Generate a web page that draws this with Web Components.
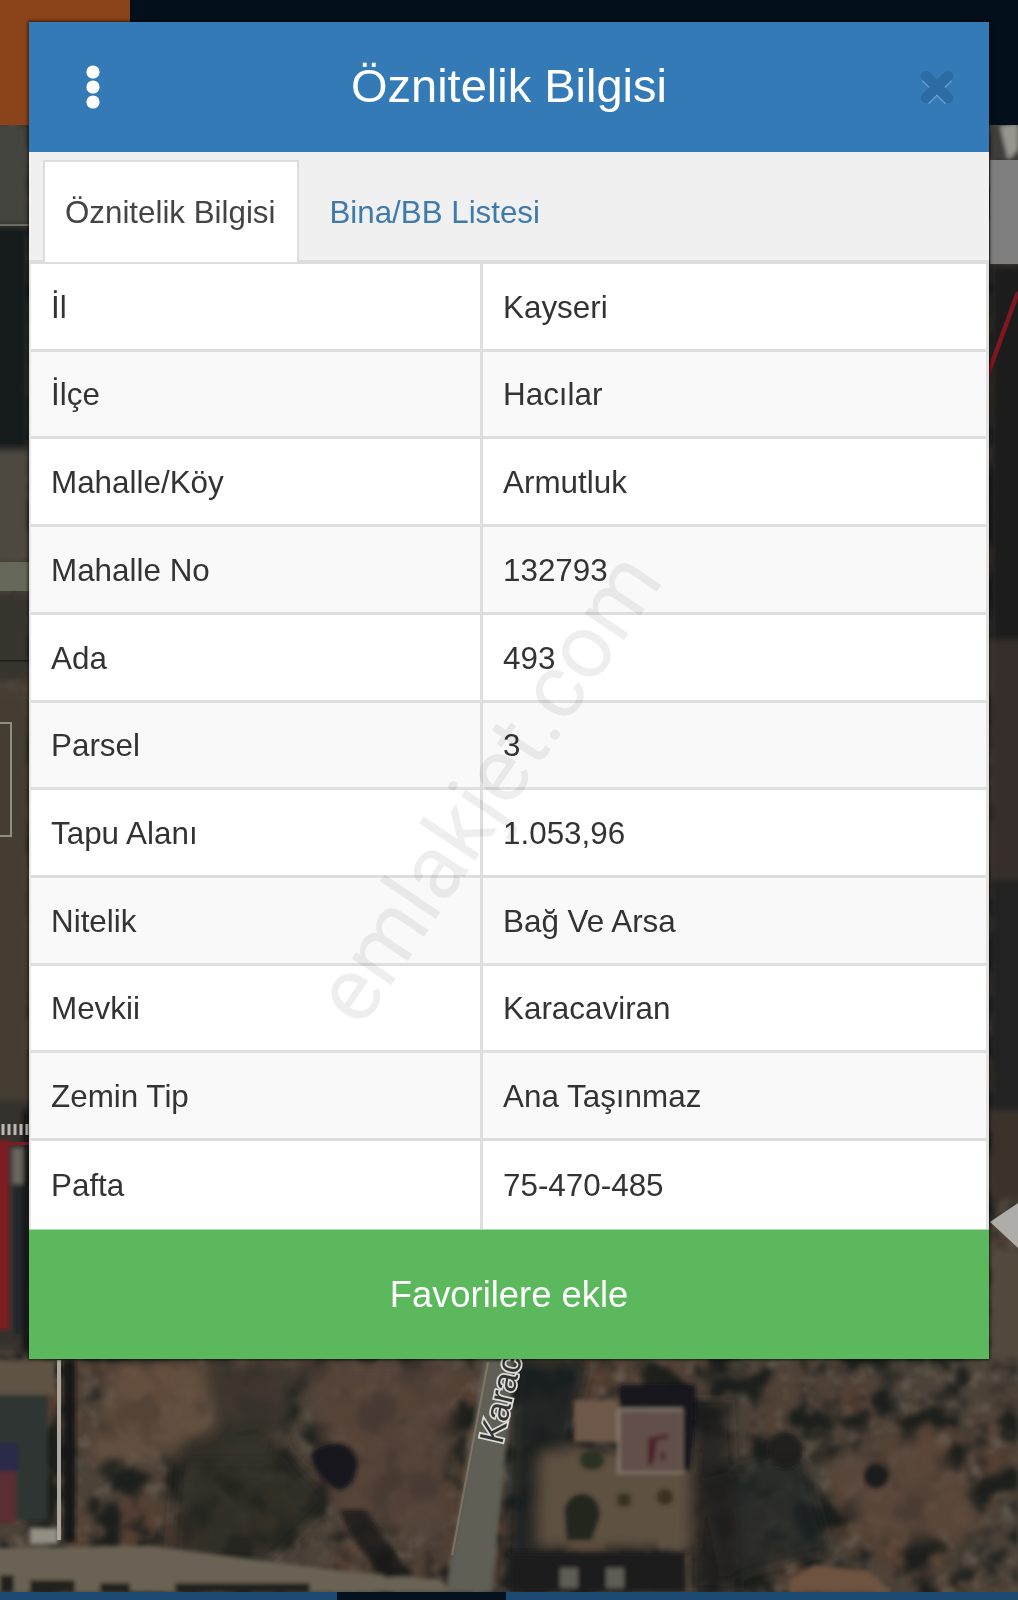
<!DOCTYPE html>
<html lang="tr">
<head>
<meta charset="utf-8">
<title>Öznitelik Bilgisi</title>
<style>
  html, body { margin: 0; padding: 0; background: #2b2620; }
</style>
</head>
<body>
<map-screen>
  <info-modal heading="Öznitelik Bilgisi">
    <modal-tabs slot="tabs">
      <tab-item active>Öznitelik Bilgisi</tab-item>
      <tab-item>Bina/BB Listesi</tab-item>
    </modal-tabs>
    <attr-row><span slot="label">İl</span><span slot="value">Kayseri</span></attr-row>
    <attr-row striped><span slot="label">İlçe</span><span slot="value">Hacılar</span></attr-row>
    <attr-row><span slot="label">Mahalle/Köy</span><span slot="value">Armutluk</span></attr-row>
    <attr-row striped><span slot="label">Mahalle No</span><span slot="value">132793</span></attr-row>
    <attr-row><span slot="label">Ada</span><span slot="value">493</span></attr-row>
    <attr-row striped><span slot="label">Parsel</span><span slot="value">3</span></attr-row>
    <attr-row><span slot="label">Tapu Alanı</span><span slot="value">1.053,96</span></attr-row>
    <attr-row striped><span slot="label">Nitelik</span><span slot="value">Bağ Ve Arsa</span></attr-row>
    <attr-row><span slot="label">Mevkii</span><span slot="value">Karacaviran</span></attr-row>
    <attr-row striped><span slot="label">Zemin Tip</span><span slot="value">Ana Taşınmaz</span></attr-row>
    <attr-row><span slot="label">Pafta</span><span slot="value">75-470-485</span></attr-row>
    <span slot="action">Favorilere ekle</span>
  </info-modal>
</map-screen>

<script>
class MapScreen extends HTMLElement {
  constructor() {
    super();
    this.attachShadow({ mode: 'open' }).innerHTML = `
<style>
  :host { display: block; position: relative; width: 1018px; height: 1600px; box-sizing: border-box;
          padding: 22px 29px 0; overflow: hidden; font-family: "Liberation Sans", Arial, sans-serif; }
  svg.bg { position: absolute; inset: 0; width: 1018px; height: 1600px; display: block; }
  .fg { position: relative; }
</style>
<svg class="bg" viewBox="0 0 1018 1600" aria-hidden="true">
  <defs>
    <filter id="trees" x="0" y="0" width="100%" height="100%" color-interpolation-filters="sRGB">
      <feTurbulence type="fractalNoise" baseFrequency=".03" numOctaves="4" seed="11"/>
      <feColorMatrix type="matrix" values="0 0 0 0 .11  0 0 0 0 .12  0 0 0 0 .11  5 0 0 0 -2.3"/>
      <feGaussianBlur stdDeviation="2.5"/>
    </filter>
    <filter id="mott" x="0" y="0" width="100%" height="100%" color-interpolation-filters="sRGB">
      <feTurbulence type="fractalNoise" baseFrequency=".06" numOctaves="3" seed="4"/>
      <feColorMatrix type="matrix" values="0 0 0 0 .50  0 0 0 0 .47  0 0 0 0 .42  3 0 0 0 -1.45"/>
      <feGaussianBlur stdDeviation="1.5"/>
    </filter>
    <filter id="rust" x="0" y="0" width="100%" height="100%" color-interpolation-filters="sRGB">
      <feTurbulence type="fractalNoise" baseFrequency=".012" numOctaves="3" seed="23"/>
      <feColorMatrix type="matrix" values="0 0 0 0 .34  0 0 0 0 .25  0 0 0 0 .20  3 0 0 0 -1.2"/>
      <feGaussianBlur stdDeviation="6"/>
    </filter>
    <filter id="b2"><feGaussianBlur stdDeviation="2"/></filter>
    <filter id="b3"><feGaussianBlur stdDeviation="3.5"/></filter>
    <filter id="b5"><feGaussianBlur stdDeviation="7"/></filter>
  </defs>

  <!-- satellite ground -->
  <rect width="1018" height="1600" fill="#4c4339"/>
  <rect width="1018" height="1600" filter="url(#rust)"/>
  <rect width="1018" height="1600" filter="url(#mott)" opacity=".4"/>
  <rect width="1018" height="1600" filter="url(#trees)"/>

  <!-- left strip -->
  <g filter="url(#b3)">
    <rect x="-10" y="125" width="39" height="100" fill="#45443f"/>
    <rect x="-10" y="225" width="39" height="225" fill="#191b1b"/>
    <rect x="-10" y="450" width="39" height="112" fill="#4e4a41"/>
    <rect x="-10" y="592" width="39" height="90" fill="#39352f"/>
    <rect x="-10" y="690" width="39" height="420" fill="#453c33"/>
    <rect x="-10" y="1100" width="39" height="250" fill="#34322e"/>
  </g>
  <g filter="url(#b2)">
    <rect x="-5" y="1140" width="14" height="190" fill="#7d1a22"/>
    <rect x="12" y="1148" width="17" height="36" fill="#68665e"/>
    <rect x="14" y="1185" width="15" height="150" fill="#24282a"/>
    <rect x="23" y="1110" width="6" height="240" fill="#141312"/>
  </g>
  <rect x="0" y="224" width="29" height="2" fill="#7b7a72" opacity=".8"/>
  <rect x="0" y="562" width="29" height="29" fill="#66685a"/>
  <rect x="0" y="660" width="29" height="1.5" fill="#1d1c1a"/>
  <path d="M0 723H11V836H0" fill="none" stroke="#9a9d93" stroke-width="2" opacity=".85"/>
  <rect x="0" y="1142" width="29" height="3" fill="#7d1a22"/>
  <path d="M3 1124v11M9 1124v11M15 1124v11M21 1124v11M27 1124v11" stroke="#b9b9b2" stroke-width="3"/>

  <!-- right strip -->
  <g filter="url(#b3)">
    <rect x="990" y="264" width="38" height="380" fill="#1f1e1d"/>
    <rect x="990" y="640" width="38" height="240" fill="#352e2a"/>
    <rect x="990" y="880" width="38" height="230" fill="#232220"/>
    <rect x="990" y="1110" width="38" height="90" fill="#3b332b"/>
    <rect x="990" y="1250" width="38" height="110" fill="#52483c"/>
  </g>
  <g filter="url(#b2)">
    <rect x="990" y="125" width="38" height="36" fill="#3f3e3a"/>
    <path d="M1000 126L1018 122V150L1008 160Z" fill="#96968e"/>
  </g>
  <rect x="990" y="160" width="28" height="104" fill="#7e7e7e"/>
  <path d="M988 374L1018 292" stroke="#7f1722" stroke-width="4.5"/>
  <path d="M990 1222L1018 1203V1248Z" fill="#aeada9"/>

  <!-- bottom area features -->
  <g filter="url(#b5)">
    <path d="M120 1360H300L270 1460H90Z" fill="#6b5545" opacity=".7"/>
    <path d="M300 1362H460L440 1540L340 1530Z" fill="#574438" opacity=".75"/>
    <path d="M180 1440L260 1420L330 1500L270 1560L170 1560Z" fill="#25281f" opacity=".75"/>
    <path d="M200 1362L300 1362L290 1430L220 1440Z" fill="#222420" opacity=".55"/>
    <path d="M515 1360L590 1360L570 1440L540 1590H505Z" fill="#1b1d1f" opacity=".85"/>
    <path d="M690 1400L730 1400L740 1590L690 1590Z" fill="#171a1a" opacity=".7"/>
    <path d="M700 1480L800 1450L830 1550L720 1580Z" fill="#1f2222" opacity=".7"/>
    <path d="M820 1460L930 1430L990 1530L870 1550Z" fill="#5e4a3b" opacity=".7"/>
    <path d="M540 1452H690V1548H538Z" fill="#5f5142"/>
  </g>
  <g filter="url(#b2)">
    <!-- left buildings and wall -->
    <rect x="-5" y="1395" width="53" height="125" fill="#2d3530"/>
    <rect x="-5" y="1443" width="23" height="28" fill="#2c2c4a"/>
    <rect x="-5" y="1471" width="21" height="52" fill="#5a2f30"/>
    <rect x="-5" y="1360" width="60" height="35" fill="#5e5245"/>
    <rect x="64" y="1360" width="11" height="182" fill="#151512"/>
    <rect x="30" y="1528" width="28" height="16" fill="#938f84"/>
    <!-- track along the foot -->
    <path d="M-5 1548L150 1546L350 1572L440 1580L450 1592H-5Z" fill="#6a6455"/>
    <path d="M0 1575h14v17H0zM30 1580h45v12H30zM100 1583h30v9h-30zM175 1583h135v9H175z" fill="#22221e"/>
    <!-- pond / shadow -->
    <path d="M312 1452C330 1438 352 1442 356 1460C358 1475 350 1490 338 1490C325 1482 310 1470 312 1452Z" fill="#13131f"/>
    <path d="M340 1510L365 1510L400 1560L415 1575L385 1578L350 1535Z" fill="#1a1b16" opacity=".8"/>
    <!-- road -->
    <path d="M484 1360L515 1360L492 1592H446Z" fill="#5f5e57"/>
    <!-- house -->
    <path d="M620 1385H695V1412L690 1470H682V1410H620Z" fill="#13141a"/>
    <path d="M574 1400H618V1442H574Z" fill="#6d5949"/>
    <rect x="617" y="1408" width="66" height="66" fill="#94897a" opacity=".8"/>
    <rect x="620" y="1411" width="62" height="61" fill="#625048"/>
    <path d="M648 1440L668 1436M655 1438L652 1462M650 1442L650 1465M662 1452L664 1460" stroke="#4c1f26" stroke-width="4"/>
    <circle cx="624" cy="1500" r="7" fill="#3b3020"/>
    <circle cx="665" cy="1497" r="8" fill="#3b3020"/>
    <path d="M565 1510a14 16 0 1 1 34 8l-8 22h-24z" fill="#22261f"/>
    <path d="M580 1460a12 10 0 1 1 24 0a12 10 0 1 1 -24 0" fill="#2b3022"/>
    <rect x="510" y="1552" width="175" height="40" fill="#1d1b1a"/>
    <path d="M560 1568h18v20h-18zM606 1568h18v20h-18z" fill="#5f5c52"/>
    <circle cx="876" cy="1476" r="12" fill="#1b1f1b"/>
    <circle cx="785" cy="1450" r="18" fill="#1a1c1a" opacity=".8"/>
    <path d="M790 1580L815 1565L870 1572L890 1592H790Z" fill="#6e523f"/>
  </g>
  <path d="M488 1362L452 1555" stroke="#a48e6f" stroke-width="2" opacity=".5"/>
  <rect x="57" y="1360" width="4" height="180" fill="#aaa89f"/>
  <text transform="translate(502 1445) rotate(-77)" font-family="Liberation Sans, sans-serif" font-size="34" font-weight="400"
        fill="#333" stroke="#dcdcd8" stroke-width="3.5" paint-order="stroke">Karac</text>

  <!-- top chrome -->
  <rect x="0" y="0" width="1018" height="125" fill="#03101c"/>
  <rect x="0" y="0" width="130" height="125" fill="#8b431a"/>

  <!-- bottom chrome -->
  <rect x="0" y="1592" width="1018" height="8" fill="#1c4a72"/>
  <rect x="337" y="1592" width="169" height="8" fill="#04121f"/>
</svg>
<div class="fg"><slot></slot></div>`;
  }
}
customElements.define('map-screen', MapScreen);

class InfoModal extends HTMLElement {
  constructor() {
    super();
    const heading = this.getAttribute('heading') || '';
    this.attachShadow({ mode: 'open' }).innerHTML = `
<style>
  :host { display: block; position: relative; width: 960px; background: #fff; color: #333;
          box-shadow: 0 0 3px 1px rgba(0,0,0,.65); }
  header { height: 130px; background: #337ab7; display: grid; grid-template-columns: 130px 1fr 130px; align-items: center; color: #fff; }
  header h1 { margin: 0; font: 400 47px/1 "Liberation Sans", Arial, sans-serif; text-align: center; padding-bottom: 4px; }
  .dots { padding-left: 57px; display: flex; }
  .close { padding-left: 61px; display: flex; }
  svg { display: block; }
  .table { border-left: 2px solid #e4e4e4; border-right: 3px solid #e0e0e0; }
  footer { height: 130px; background: #5cb85c; color: #fff; display: flex; align-items: center; justify-content: center;
           font: 400 36.4px/1 "Liberation Sans", Arial, sans-serif; border-top: 1px solid #a9dca9; box-sizing: border-box; padding-top: 2px; }
  .mark { position: absolute; left: 459px; top: 766px; transform: translate(-50%, -50%) rotate(-56deg);
          font: 400 90px/1 Roboto, "Liberation Sans", sans-serif; white-space: nowrap; color: rgba(0,0,0,.065); pointer-events: none; }
</style>
<header>
  <div class="dots">
    <svg width="14" height="44" viewBox="0 0 14 44"><g fill="#fff"><circle cx="7" cy="7" r="6.6"/><circle cx="7" cy="22" r="6.6"/><circle cx="7" cy="37" r="6.6"/></g></svg>
  </div>
  <h1>${heading}</h1>
  <div class="close">
    <svg width="34" height="34" viewBox="0 0 34 34">
      <path d="M5.5 7.5L28.5 30.5M28.5 7.5L5.5 30.5" stroke="#6ea6d8" stroke-width="10" fill="none"/>
      <path d="M6 6L28 28M28 6L6 28" stroke="#2c6ca3" stroke-width="10.5" fill="none" stroke-linecap="round"/>
    </svg>
  </div>
</header>
<slot name="tabs"></slot>
<div class="table"><slot></slot></div>
<footer><slot name="action"></slot></footer>
<div class="mark">emlakjet.com</div>`;
  }
}
customElements.define('info-modal', InfoModal);

class ModalTabs extends HTMLElement {
  constructor() {
    super();
    this.attachShadow({ mode: 'open' }).innerHTML = `
<style>
  :host { display: flex; height: 112px; box-sizing: border-box; padding: 8px 0 0 14px; background: #f0f0f0;
          border-bottom: 4px solid #ddd; }
</style>
<slot></slot>`;
  }
}
customElements.define('modal-tabs', ModalTabs);

class TabItem extends HTMLElement {
  constructor() {
    super();
    this.attachShadow({ mode: 'open' }).innerHTML = `
<style>
  :host { display: flex; align-items: center; box-sizing: border-box; height: 102px; padding: 2px 22px 0 21px;
          font: 400 31.3px/1 "Liberation Sans", Arial, sans-serif; color: #3f7aad; border: 2px solid transparent; border-bottom: 0; }
  :host([active]) { background: #fff; color: #444; border-color: #ddd; margin-right: 7px; padding: 2px 22px 0 20px; }
</style>
<slot></slot>`;
  }
}
customElements.define('tab-item', TabItem);

class AttrRow extends HTMLElement {
  constructor() {
    super();
    this.attachShadow({ mode: 'open' }).innerHTML = `
<style>
  :host { display: grid; grid-template-columns: 449px 1fr; height: 87.73px; box-sizing: border-box; background: #fff;
          border-bottom: 3px solid #dedede; font: 400 31.4px/1 "Liberation Sans", Arial, sans-serif; color: #333; }
  :host([striped]) { background: #f9f9f9; }
  :host(:last-of-type) { border-bottom-width: 0; }
  div { display: flex; align-items: center; padding: 2px 0 0 20px; box-sizing: border-box; }
  div + div { border-left: 3px solid #dedede; }
</style>
<div><slot name="label"></slot></div>
<div><slot name="value"></slot></div>`;
  }
}
customElements.define('attr-row', AttrRow);
</script>
</body>
</html>
